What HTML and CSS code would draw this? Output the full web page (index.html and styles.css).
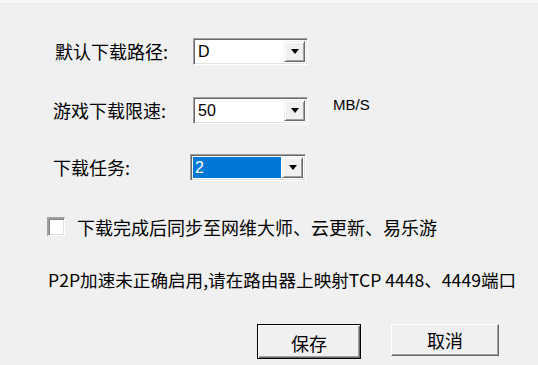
FILE: index.html
```html
<!DOCTYPE html>
<html lang="zh-CN">

<head>
    <meta charset="UTF-8">
    <meta name="viewport" content="width=device-width, initial-scale=1.0">
    <title>下载设置</title>
    <link rel="stylesheet" href="styles.css">
</head>

<body>
    <div class="dialog">
        <div class="topline"></div>

        <div class="row row1">
            <label class="label">默认下载路径:</label>
            <div class="combo">
                <span class="field">D</span>
                <span class="drop"><svg width="8" height="5" viewBox="0 0 8 5"><path d="M0 0H8L4 5Z" fill="#000"/></svg></span>
            </div>
        </div>

        <div class="row row2">
            <label class="label">游戏下载限速:</label>
            <div class="combo">
                <span class="field">50</span>
                <span class="drop"><svg width="8" height="5" viewBox="0 0 8 5"><path d="M0 0H8L4 5Z" fill="#000"/></svg></span>
            </div>
            <span class="unit">MB/S</span>
        </div>

        <div class="row row3">
            <label class="label">下载任务:</label>
            <div class="combo combo-sel">
                <span class="field"><span class="sel">2</span></span>
                <span class="drop"><svg width="8" height="5" viewBox="0 0 8 5"><path d="M0 0H8L4 5Z" fill="#000"/></svg></span>
            </div>
        </div>

        <div class="check-row">
            <span class="checkbox"></span>
            <span class="check-text">下载完成后同步至网维大师、云更新、易乐游</span>
        </div>

        <div class="notice">P2P加速未正确启用,请在路由器上映射TCP 4448、4449端口</div>

        <div class="buttons">
            <button class="btn btn-default">保存</button>
            <button class="btn btn-cancel">取消</button>
        </div>
    </div>
</body>

</html>
```

FILE: styles.css
```css
* {
    margin: 0;
    padding: 0;
    box-sizing: border-box;
}

body {
    width: 538px;
    height: 365px;
    overflow: hidden;
    background-color: #f0f0f0;
    font-family: "Noto Sans CJK SC", sans-serif;
    color: #000;
}

.dialog {
    width: 538px;
    height: 365px;
    display: flex;
    flex-direction: column;
}

.topline {
    height: 4px;
    background-color: #f8f8f8;
    border-bottom: 1px solid #ececec;
}

.row {
    height: 27px;
    display: flex;
    align-items: center;
    padding-left: 53px;
}

.row1 {
    margin-top: 34px;
}

.row1 .label {
    padding-left: 2px;
}

.row2 {
    margin-top: 32px;
}

.row3 {
    margin-top: 30px;
}

.row3 .combo {
    margin-left: -3px;
    width: 116px;
}

.label {
    width: 140px;
    font-size: 18px;
    line-height: 27px;
}

.combo {
    width: 115px;
    height: 27px;
    display: flex;
    border-top: 1px solid #a0a0a0;
    border-left: 1px solid #a0a0a0;
    border-right: 1px solid #fff;
    border-bottom: 1px solid #fff;
    box-shadow: inset 1px 1px 0 #696969, inset -1px -1px 0 #e3e3e3;
    background-color: #fff;
    padding: 2px;
}

.field {
    flex: 1;
    display: flex;
    align-items: center;
    padding-left: 2px;
    font-family: "Liberation Sans", Arial, sans-serif;
    font-size: 16px;
}

.combo-sel .field {
    padding-left: 0;
    background-color: #0078d7;
    margin-right: 1px;
}

.sel {
    color: #fff;
    padding-left: 2px;
}

.drop {
    width: 21px;
    display: flex;
    align-items: center;
    justify-content: center;
    background-color: #f0f0f0;
    border-top: 1px solid #f0f0f0;
    border-left: 1px solid #f0f0f0;
    border-right: 1px solid #696969;
    border-bottom: 1px solid #696969;
    box-shadow: inset 1px 1px 0 #fff, inset -1px -1px 0 #a0a0a0;
}

.unit {
    margin-left: 25px;
    margin-top: -13px;
    font-family: "Liberation Sans", Arial, sans-serif;
    font-size: 15px;
}

.check-row {
    margin-top: 36px;
    height: 19px;
    display: flex;
    align-items: center;
    padding-left: 47px;
}

.checkbox {
    width: 18px;
    height: 19px;
    background-color: #fff;
    border-top: 2px solid #a0a0a0;
    border-left: 2px solid #a0a0a0;
    border-right: 1px solid #fff;
    border-bottom: 1px solid #fff;
    box-shadow: inset 1px 1px 0 #808080, inset -1px -1px 0 #e3e3e3;
}

.check-text {
    margin-left: 12px;
    font-size: 18px;
    line-height: 18px;
}

.notice {
    margin-top: 35px;
    padding-left: 48px;
    height: 18px;
    font-size: 17.6px;
    line-height: 18px;
    white-space: nowrap;
}

.buttons {
    margin-top: 35px;
    display: flex;
    align-items: flex-start;
    padding-left: 257px;
    gap: 30px;
}

.btn {
    width: 104px;
    font-family: "Noto Sans CJK SC", sans-serif;
    font-size: 18px;
    color: #000;
    background-color: #f0f0f0;
    cursor: pointer;
}

.btn-default {
    height: 35px;
    border: 1px solid #000;
    box-shadow: inset 1px 1px 0 #fff, inset -1px -1px 0 #696969, inset -2px -2px 0 #a0a0a0;
    padding-top: 2px;
}

.btn-cancel {
    width: 108px;
    height: 32px;
    border-top: 1px solid #fff;
    border-left: 1px solid #fff;
    border-right: 1px solid #696969;
    border-bottom: 1px solid #696969;
    box-shadow: inset -1px -1px 0 #a0a0a0;
}
```
